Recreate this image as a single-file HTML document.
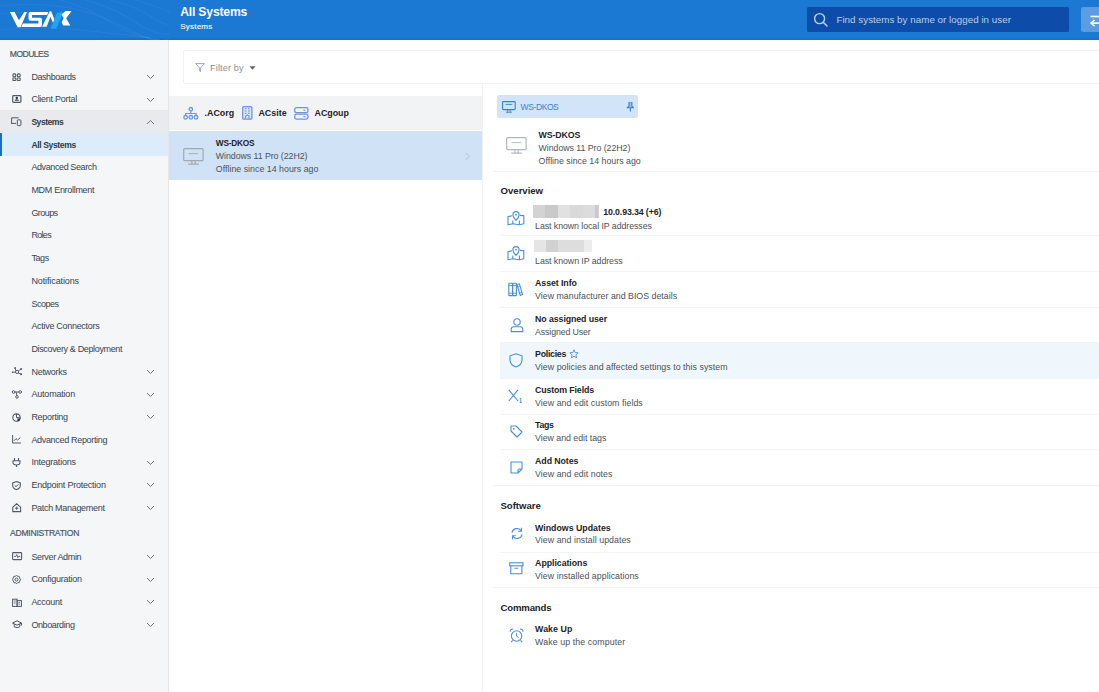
<!DOCTYPE html>
<html><head><meta charset="utf-8"><title>All Systems</title>
<style>
html,body{margin:0;padding:0;width:1099px;height:692px;overflow:hidden;background:#fff;}
body{position:relative;font-family:"Liberation Sans", sans-serif;}
.t{position:absolute;white-space:nowrap;}
.r{position:absolute;display:block;overflow:visible;}
</style></head><body>
<div class="r" style="left:0.00px;top:0.00px;width:1099.00px;height:692.00px;background:#ffffff;"></div>
<div class="r" style="left:0.00px;top:40.00px;width:168.00px;height:652.00px;background:#f4f6f8;"></div>
<div class="r" style="left:168.00px;top:40.00px;width:1.00px;height:652.00px;background:#e4e6e9;"></div>
<div class="r" style="left:0.00px;top:0.00px;width:1099.00px;height:40.00px;background:#1b78d3;"></div>
<div class="r" style="left:0.00px;top:37.50px;width:1099.00px;height:2.00px;background:#1b70c8;"></div>
<svg class="r" style="left:0.00px;top:0.00px;" width="170" height="40" viewBox="0 0 170 40"><g fill="none" stroke="#ffffff" stroke-opacity="0.07" stroke-width="0.8"><path d="M0,6 Q40,2 70,8 T130,30 T170,38"/><path d="M0,14 Q30,10 60,16"/><path d="M0,30 Q40,26 80,30 T150,38"/><path d="M60,0 Q90,8 110,22 T160,40"/><path d="M85,0 Q115,8 135,22 T170,34"/><path d="M110,0 Q135,6 150,16 T170,24"/><path d="M135,0 Q150,4 170,12"/></g></svg>
<svg class="r" style="left:0.00px;top:0.00px;" width="80" height="40" viewBox="0 0 80 40">
<polygon points="9.9,12.1 14.6,12.1 18.9,20.2 24.3,12.1 27.0,12.1 20.5,27.2 17.6,27.2" fill="#fff"/>
<path d="M30.4,12.1 H48.3 L47.2,15.1 H32 V17.8 H40.2 Q42,17.8 42,19.6 V25.3 Q42,27.1 40.2,27.1 H21.4 L22.8,23.6 H38.4 V20.7 H30.4 Q28.5,20.7 28.5,18.8 V14 Q28.5,12.1 30.4,12.1 Z" fill="#fff"/>
<polygon points="42.1,26.8 49.8,11.3 51.2,11.3 55.6,22.4 52.8,22.4 50.4,16.8 46.7,26.8" fill="#fff"/>
<polygon points="57.2,12.4 63.2,12.4 56.4,28.6 50.6,28.6" fill="#21a5f3"/>
<polygon points="65.5,10.9 71.6,10.9 66.2,18.3 70.3,25.6 63.2,25.6 61.6,22.2 63.6,18.3 61.6,14.6" fill="#fff"/>
</svg>
<div class="t" style="left:180.20px;top:6px;font-size:12.2px;line-height:12.2px;font-weight:bold;color:#ffffff;letter-spacing:-0.196px;">All Systems</div>
<div class="t" style="left:180.20px;top:23px;font-size:8.0px;line-height:8.0px;font-weight:normal;color:#f4f8fd;letter-spacing:0.221px;-webkit-text-stroke:0.15px #f4f8fd;">Systems</div>
<div class="r" style="left:806.80px;top:7.10px;width:261.90px;height:24.70px;background:#0e4ca9;border-radius:1.5px"></div>
<svg class="r" style="left:813.00px;top:12.00px;" width="16" height="16" viewBox="0 0 16 16"><circle cx="6.6" cy="6.6" r="5" fill="none" stroke="#b6d2f2" stroke-width="1.4"/><line x1="10.2" y1="10.2" x2="14" y2="14" stroke="#b6d2f2" stroke-width="1.5" stroke-linecap="round"/></svg>
<div class="t" style="left:836.40px;top:15px;font-size:9.8px;line-height:9.8px;font-weight:normal;color:#b4cfee;letter-spacing:0.023px;">Find systems by name or logged in user</div>
<div class="r" style="left:1080.50px;top:7.40px;width:30.00px;height:24.70px;background:#5c9de1;border-radius:2.5px"></div>
<svg class="r" style="left:1088.00px;top:12.00px;" width="14" height="16" viewBox="0 0 14 16"><line x1="2.6" y1="4.5" x2="14" y2="4.5" stroke="#fff" stroke-width="1.6"/><line x1="3.5" y1="11.1" x2="14" y2="11.1" stroke="#fff" stroke-width="1.6"/><polyline points="6.5,8 3,11.1 6.5,14.2" fill="none" stroke="#fff" stroke-width="1.6"/></svg>
<div class="t" style="left:9.80px;top:50px;font-size:8.6px;line-height:8.6px;font-weight:normal;color:#4d5965;letter-spacing:-0.571px;-webkit-text-stroke:0.2px #4d5965;">MODULES</div>
<div class="r" style="left:0.00px;top:110.40px;width:168.00px;height:22.70px;background:#e9eaed;"></div>
<div class="r" style="left:0.00px;top:133.10px;width:168.00px;height:22.90px;background:#dcecfb;"></div>
<div class="r" style="left:0.00px;top:133.10px;width:2.00px;height:22.90px;background:#1c6cca;"></div>
<div class="t" style="left:31.40px;top:73px;font-size:9.0px;line-height:9.0px;font-weight:normal;color:#394451;letter-spacing:-0.425px;">Dashboards</div>
<svg class="r" style="left:11.60px;top:72.50px;" width="11" height="10" viewBox="0 0 11 10"><rect x="0.9" y="0.9" width="2.9" height="2.9" rx="1" fill="none" stroke="#4f5a66" stroke-width="1.1"/><rect x="5.3" y="0.9" width="2.9" height="2.9" rx="1" fill="none" stroke="#4f5a66" stroke-width="1.1"/><rect x="0.9" y="5" width="2.9" height="2.5" rx="0.6" fill="none" stroke="#4f5a66" stroke-width="1.1"/><rect x="5.3" y="5" width="2.9" height="2.5" rx="0.6" fill="none" stroke="#4f5a66" stroke-width="1.1"/></svg>
<svg class="r" style="left:146.00px;top:74.30px;" width="9" height="6" viewBox="0 0 9 6"><polyline points="1,1 4.5,4.5 8,1" fill="none" stroke="#6a7580" stroke-width="1"/></svg>
<div class="t" style="left:31.40px;top:95px;font-size:9.0px;line-height:9.0px;font-weight:normal;color:#394451;letter-spacing:-0.260px;">Client Portal</div>
<svg class="r" style="left:11.60px;top:95.17px;" width="11" height="10" viewBox="0 0 11 10"><rect x="0.7" y="0.6" width="8.2" height="6.8" rx="0.8" fill="none" stroke="#4f5a66" stroke-width="1.2"/><circle cx="4.8" cy="2.9" r="1.2" fill="#2e3842"/><path d="M2.6,5.8 Q2.6,4.3 4.8,4.3 Q7,4.3 7,5.8 Z" fill="#2e3842"/></svg>
<svg class="r" style="left:146.00px;top:96.97px;" width="9" height="6" viewBox="0 0 9 6"><polyline points="1,1 4.5,4.5 8,1" fill="none" stroke="#6a7580" stroke-width="1"/></svg>
<div class="t" style="left:31.40px;top:118px;font-size:8.6px;line-height:8.6px;font-weight:bold;color:#2e3a47;letter-spacing:-0.513px;">Systems</div>
<svg class="r" style="left:10.80px;top:117.04px;" width="11" height="10" viewBox="0 0 11 10"><path d="M0.6,6 V0.8 H7.5 M0,6.4 H5" fill="none" stroke="#4f5a66" stroke-width="1"/><rect x="6.3" y="2.8" width="3.6" height="5.8" rx="0.8" fill="none" stroke="#4f5a66" stroke-width="1"/></svg>
<svg class="r" style="left:146.00px;top:118.84px;" width="9" height="6" viewBox="0 0 9 6"><polyline points="1,5 4.5,1.5 8,5" fill="none" stroke="#6a7580" stroke-width="1"/></svg>
<div class="t" style="left:31.40px;top:141px;font-size:8.6px;line-height:8.6px;font-weight:bold;color:#2e3a47;letter-spacing:-0.385px;">All Systems</div>
<div class="t" style="left:31.40px;top:163px;font-size:9.0px;line-height:9.0px;font-weight:normal;color:#394451;letter-spacing:-0.396px;">Advanced Search</div>
<div class="t" style="left:31.40px;top:186px;font-size:9.0px;line-height:9.0px;font-weight:normal;color:#394451;letter-spacing:-0.301px;">MDM Enrollment</div>
<div class="t" style="left:31.40px;top:209px;font-size:9.0px;line-height:9.0px;font-weight:normal;color:#394451;letter-spacing:-0.562px;">Groups</div>
<div class="t" style="left:31.40px;top:231px;font-size:9.0px;line-height:9.0px;font-weight:normal;color:#394451;letter-spacing:-0.678px;">Roles</div>
<div class="t" style="left:31.40px;top:254px;font-size:9.0px;line-height:9.0px;font-weight:normal;color:#394451;letter-spacing:-0.403px;">Tags</div>
<div class="t" style="left:31.40px;top:277px;font-size:9.0px;line-height:9.0px;font-weight:normal;color:#394451;letter-spacing:-0.110px;">Notifications</div>
<div class="t" style="left:31.40px;top:300px;font-size:9.0px;line-height:9.0px;font-weight:normal;color:#394451;letter-spacing:-0.503px;">Scopes</div>
<div class="t" style="left:31.40px;top:322px;font-size:9.0px;line-height:9.0px;font-weight:normal;color:#394451;letter-spacing:-0.296px;">Active Connectors</div>
<div class="t" style="left:31.40px;top:345px;font-size:9.0px;line-height:9.0px;font-weight:normal;color:#394451;letter-spacing:-0.354px;">Discovery &amp; Deployment</div>
<div class="t" style="left:31.40px;top:368px;font-size:9.0px;line-height:9.0px;font-weight:normal;color:#394451;letter-spacing:-0.259px;">Networks</div>
<svg class="r" style="left:11.60px;top:367.21px;" width="11" height="10" viewBox="0 0 11 10"><circle cx="5.1" cy="4.9" r="1.6" fill="none" stroke="#4f5a66" stroke-width="1"/><path d="M0.4,5.2 H3.5 M3.9,3.8 L3.1,1 M6.3,3.9 L9.1,2 M6.3,6 L9.1,7.2" stroke="#4f5a66" stroke-width="0.9"/><circle cx="3.1" cy="0.9" r="0.9" fill="#4f5a66"/><circle cx="9.1" cy="2" r="1" fill="#4f5a66"/><circle cx="9.1" cy="7.2" r="1" fill="#4f5a66"/><circle cx="0.6" cy="5.2" r="0.8" fill="#4f5a66"/></svg>
<svg class="r" style="left:146.00px;top:369.01px;" width="9" height="6" viewBox="0 0 9 6"><polyline points="1,1 4.5,4.5 8,1" fill="none" stroke="#6a7580" stroke-width="1"/></svg>
<div class="t" style="left:31.40px;top:390px;font-size:9.0px;line-height:9.0px;font-weight:normal;color:#394451;letter-spacing:-0.192px;">Automation</div>
<svg class="r" style="left:11.60px;top:389.88px;" width="11" height="10" viewBox="0 0 11 10"><circle cx="1.6" cy="2" r="1.3" fill="none" stroke="#4f5a66" stroke-width="1"/><circle cx="8.2" cy="2" r="1.3" fill="none" stroke="#4f5a66" stroke-width="1"/><circle cx="5" cy="6.9" r="1.3" fill="none" stroke="#4f5a66" stroke-width="1"/><path d="M2.9,2 H6.9 M4.2,2.2 L4.8,5.6" stroke="#4f5a66" stroke-width="1"/></svg>
<svg class="r" style="left:146.00px;top:391.68px;" width="9" height="6" viewBox="0 0 9 6"><polyline points="1,1 4.5,4.5 8,1" fill="none" stroke="#6a7580" stroke-width="1"/></svg>
<div class="t" style="left:31.40px;top:413px;font-size:9.0px;line-height:9.0px;font-weight:normal;color:#394451;letter-spacing:-0.290px;">Reporting</div>
<svg class="r" style="left:11.60px;top:412.55px;" width="11" height="10" viewBox="0 0 11 10"><circle cx="4.5" cy="4.6" r="3.7" fill="none" stroke="#4f5a66" stroke-width="1.1"/><path d="M4.5,0.9 V4.6 H8.2" fill="none" stroke="#4f5a66" stroke-width="1"/><path d="M5.4,5.5 H8.6 A4,4 0 0 1 5.4,8.6 Z" fill="#2f3a45"/></svg>
<svg class="r" style="left:146.00px;top:414.35px;" width="9" height="6" viewBox="0 0 9 6"><polyline points="1,1 4.5,4.5 8,1" fill="none" stroke="#6a7580" stroke-width="1"/></svg>
<div class="t" style="left:31.40px;top:436px;font-size:9.0px;line-height:9.0px;font-weight:normal;color:#394451;letter-spacing:-0.321px;">Advanced Reporting</div>
<svg class="r" style="left:11.60px;top:435.22px;" width="11" height="10" viewBox="0 0 11 10"><path d="M0.6,0 V8 H9" fill="none" stroke="#4f5a66" stroke-width="1"/><path d="M2,5.8 L4,3.6 L5.6,5 L8.4,2.4" fill="none" stroke="#4f5a66" stroke-width="1"/></svg>
<div class="t" style="left:31.40px;top:458px;font-size:9.0px;line-height:9.0px;font-weight:normal;color:#394451;letter-spacing:-0.221px;">Integrations</div>
<svg class="r" style="left:11.60px;top:457.89px;" width="11" height="10" viewBox="0 0 11 10"><path d="M2.5,0 V2.5 M6.5,0 V2.5 M1,2.7 H8 V4.5 Q8,7 4.5,7 Q1,7 1,4.5 Z M4.5,7 V9" fill="none" stroke="#4f5a66" stroke-width="1.1"/></svg>
<svg class="r" style="left:146.00px;top:459.69px;" width="9" height="6" viewBox="0 0 9 6"><polyline points="1,1 4.5,4.5 8,1" fill="none" stroke="#6a7580" stroke-width="1"/></svg>
<div class="t" style="left:31.40px;top:481px;font-size:9.0px;line-height:9.0px;font-weight:normal;color:#394451;letter-spacing:-0.225px;">Endpoint Protection</div>
<svg class="r" style="left:11.60px;top:480.56px;" width="11" height="10" viewBox="0 0 11 10"><path d="M4.5,0.6 L8.3,1.9 V4.4 Q8.3,7.3 4.5,8.6 Q0.7,7.3 0.7,4.4 V1.9 Z" fill="none" stroke="#4f5a66" stroke-width="1.1"/><path d="M2.8,4.5 L4.1,5.7 L6.3,3.3" fill="none" stroke="#4f5a66" stroke-width="1"/></svg>
<svg class="r" style="left:146.00px;top:482.36px;" width="9" height="6" viewBox="0 0 9 6"><polyline points="1,1 4.5,4.5 8,1" fill="none" stroke="#6a7580" stroke-width="1"/></svg>
<div class="t" style="left:31.40px;top:504px;font-size:9.0px;line-height:9.0px;font-weight:normal;color:#394451;letter-spacing:-0.303px;">Patch Management</div>
<svg class="r" style="left:11.60px;top:503.23px;" width="11" height="10" viewBox="0 0 11 10"><path d="M0.8,4.2 L4.7,0.8 L8.6,4.2 V8.6 H0.8 Z" fill="none" stroke="#4f5a66" stroke-width="1.1"/><path d="M4.7,3.6 V6.8 M3.1,5.2 H6.3" stroke="#4f5a66" stroke-width="1"/></svg>
<svg class="r" style="left:146.00px;top:505.03px;" width="9" height="6" viewBox="0 0 9 6"><polyline points="1,1 4.5,4.5 8,1" fill="none" stroke="#6a7580" stroke-width="1"/></svg>
<div class="t" style="left:10.10px;top:529px;font-size:8.6px;line-height:8.6px;font-weight:normal;color:#4d5965;letter-spacing:-0.280px;-webkit-text-stroke:0.2px #4d5965;">ADMINISTRATION</div>
<div class="t" style="left:31.40px;top:553px;font-size:9.0px;line-height:9.0px;font-weight:normal;color:#394451;letter-spacing:-0.348px;">Server Admin</div>
<svg class="r" style="left:11.60px;top:552.20px;" width="11" height="10" viewBox="0 0 11 10"><rect x="0.6" y="0.6" width="9" height="7" rx="0.8" fill="none" stroke="#4f5a66" stroke-width="1.1"/><path d="M2,4.4 H3.8 L4.8,2.6 L5.8,5.6 L6.6,4.4 H8.2" fill="none" stroke="#4f5a66" stroke-width="0.9"/></svg>
<svg class="r" style="left:146.00px;top:554.00px;" width="9" height="6" viewBox="0 0 9 6"><polyline points="1,1 4.5,4.5 8,1" fill="none" stroke="#6a7580" stroke-width="1"/></svg>
<div class="t" style="left:31.40px;top:575px;font-size:9.0px;line-height:9.0px;font-weight:normal;color:#394451;letter-spacing:-0.244px;">Configuration</div>
<svg class="r" style="left:11.60px;top:574.87px;" width="11" height="10" viewBox="0 0 11 10"><circle cx="4.5" cy="4.5" r="1.5" fill="none" stroke="#4f5a66" stroke-width="1"/><path d="M4.5,0.5 L5.6,1.2 L7.2,1.4 L7.6,2.8 L8.5,4.5 L7.6,6.2 L7.2,7.6 L5.6,7.8 L4.5,8.5 L3.4,7.8 L1.8,7.6 L1.4,6.2 L0.5,4.5 L1.4,2.8 L1.8,1.4 L3.4,1.2 Z" fill="none" stroke="#4f5a66" stroke-width="1"/></svg>
<svg class="r" style="left:146.00px;top:576.67px;" width="9" height="6" viewBox="0 0 9 6"><polyline points="1,1 4.5,4.5 8,1" fill="none" stroke="#6a7580" stroke-width="1"/></svg>
<div class="t" style="left:31.40px;top:598px;font-size:9.0px;line-height:9.0px;font-weight:normal;color:#394451;letter-spacing:-0.270px;">Account</div>
<svg class="r" style="left:11.60px;top:597.54px;" width="11" height="10" viewBox="0 0 11 10"><rect x="0.6" y="1.2" width="4.5" height="7.2" fill="none" stroke="#4f5a66" stroke-width="1"/><rect x="5.1" y="2.6" width="4.3" height="5.8" fill="none" stroke="#4f5a66" stroke-width="1"/><path d="M1.8,3 H3.8 M1.8,5 H3.8 M6.4,4.4 H8 M6.4,6.2 H8" stroke="#4f5a66" stroke-width="0.8"/></svg>
<svg class="r" style="left:146.00px;top:599.34px;" width="9" height="6" viewBox="0 0 9 6"><polyline points="1,1 4.5,4.5 8,1" fill="none" stroke="#6a7580" stroke-width="1"/></svg>
<div class="t" style="left:31.40px;top:621px;font-size:9.0px;line-height:9.0px;font-weight:normal;color:#394451;letter-spacing:-0.393px;">Onboarding</div>
<svg class="r" style="left:11.60px;top:620.21px;" width="11" height="10" viewBox="0 0 11 10"><path d="M0.5,3 L5,0.8 L9.5,3 L5,5.2 Z" fill="none" stroke="#4f5a66" stroke-width="1"/><path d="M2.2,4 V6.8 Q5,8.6 7.8,6.8 V4 M9.5,3 V5.5" fill="none" stroke="#4f5a66" stroke-width="1"/></svg>
<svg class="r" style="left:146.00px;top:622.01px;" width="9" height="6" viewBox="0 0 9 6"><polyline points="1,1 4.5,4.5 8,1" fill="none" stroke="#6a7580" stroke-width="1"/></svg>
<div class="r" style="left:183.30px;top:50.30px;width:930.00px;height:33.70px;background:#ffffff;box-sizing:border-box;border:1px solid #eff1f3;border-radius:2px"></div>
<svg class="r" style="left:194.50px;top:63.00px;" width="10" height="9" viewBox="0 0 10 9"><path d="M0.6,0.6 H9.4 L5.6,4.8 V8.6 L4.4,7.8 V4.8 Z" fill="none" stroke="#8d9ad0" stroke-width="0.9" stroke-linejoin="round"/></svg>
<div class="t" style="left:210.10px;top:64px;font-size:9.2px;line-height:9.2px;font-weight:normal;color:#8b9097;letter-spacing:0.111px;">Filter by</div>
<svg class="r" style="left:249.00px;top:66.00px;" width="7" height="4" viewBox="0 0 7 4"><polygon points="0.5,0.3 6.5,0.3 3.5,3.7" fill="#5f6368"/></svg>
<div class="r" style="left:168.50px;top:96.00px;width:313.20px;height:34.30px;background:#f1f3f5;"></div>
<div class="r" style="left:168.50px;top:130.30px;width:313.20px;height:0.80px;background:#ffffff;"></div>
<div class="r" style="left:168.50px;top:131.10px;width:313.20px;height:48.50px;background:#cfe2f6;"></div>
<div class="r" style="left:481.50px;top:84.00px;width:1.00px;height:608.00px;background:#eff0f2;"></div>
<svg class="r" style="left:182.50px;top:106.80px;" width="16" height="13" viewBox="0 0 16 13"><circle cx="7.8" cy="2.2" r="1.7" fill="none" stroke="#6c96dc" stroke-width="1.3"/><path d="M7.8,3.9 V6.5 M2.6,8.6 V6.5 H13 V8.6" fill="none" stroke="#6c96dc" stroke-width="1.2"/><circle cx="2.6" cy="10.3" r="1.8" fill="none" stroke="#6c96dc" stroke-width="1.3"/><circle cx="7.8" cy="10.3" r="1.8" fill="none" stroke="#6c96dc" stroke-width="1.3"/><circle cx="13" cy="10.3" r="1.8" fill="none" stroke="#6c96dc" stroke-width="1.3"/></svg>
<div class="t" style="left:204.60px;top:109px;font-size:8.9px;line-height:8.9px;font-weight:bold;color:#1f2327;letter-spacing:-0.013px;">.ACorg</div>
<svg class="r" style="left:241.50px;top:106.20px;" width="11" height="14" viewBox="0 0 11 14"><rect x="0.7" y="0.7" width="9.2" height="12.4" rx="1.2" fill="#dfe7f5" stroke="#6c96dc" stroke-width="1.3"/><path d="M2.8,2.8 H4.6 M6,2.8 H7.8 M2.8,5 H4.6 M6,5 H7.8 M2.8,7.2 H4.6 M6,7.2 H7.8 M3.6,12.8 V10 L5.3,8.8 L7,10 V12.8" fill="none" stroke="#6c96dc" stroke-width="1.1"/></svg>
<div class="t" style="left:258.40px;top:109px;font-size:8.9px;line-height:8.9px;font-weight:bold;color:#1f2327;letter-spacing:0.041px;">ACsite</div>
<svg class="r" style="left:293.50px;top:106.60px;" width="15" height="13" viewBox="0 0 15 13"><rect x="0.7" y="0.7" width="13.3" height="5" rx="1.8" fill="none" stroke="#6c96dc" stroke-width="1.3"/><rect x="0.7" y="7.1" width="13.3" height="5" rx="1.8" fill="none" stroke="#6c96dc" stroke-width="1.3"/><path d="M9.3,3.2 H11.6 M9.3,9.6 H11.6" stroke="#6c96dc" stroke-width="1"/></svg>
<div class="t" style="left:314.60px;top:109px;font-size:8.9px;line-height:8.9px;font-weight:bold;color:#1f2327;letter-spacing:-0.041px;">ACgoup</div>
<svg class="r" style="left:182.80px;top:147.80px;" width="21" height="17" viewBox="0 0 21 17"><rect x="0.7" y="0.7" width="19.4" height="12" rx="1" fill="none" stroke="#a3a9b0" stroke-width="1.2"/><path d="M5.6,5.6 H15" stroke="#a3a9b0" stroke-width="0.9"/><path d="M8.9,12.7 V15.4 M12.1,12.7 V15.4 M5.2,16.1 H15.8" stroke="#a3a9b0" stroke-width="1.1"/></svg>
<div class="t" style="left:215.80px;top:139px;font-size:8.3px;line-height:8.3px;font-weight:bold;color:#1f2327;letter-spacing:-0.236px;">WS-DKOS</div>
<div class="t" style="left:215.80px;top:152px;font-size:8.8px;line-height:8.8px;font-weight:normal;color:#4d5258;letter-spacing:-0.053px;">Windows 11 Pro (22H2)</div>
<div class="t" style="left:215.80px;top:165px;font-size:8.8px;line-height:8.8px;font-weight:normal;color:#4d5258;letter-spacing:0.021px;">Offline since 14 hours ago</div>
<svg class="r" style="left:463.50px;top:151.50px;" width="8" height="9" viewBox="0 0 8 9"><polyline points="1.5,0.8 5.5,4.5 1.5,8.2" fill="none" stroke="#c0cfdf" stroke-width="1.2"/></svg>
<div class="r" style="left:497.00px;top:95.40px;width:141.10px;height:22.90px;background:#d2e4f8;border-radius:2.5px"></div>
<svg class="r" style="left:501.50px;top:100.80px;" width="14" height="12" viewBox="0 0 14 12"><rect x="0.6" y="0.6" width="12.6" height="8" rx="0.8" fill="none" stroke="#3c80d0" stroke-width="1.1"/><path d="M3.5,3.4 H10.3" stroke="#3c80d0" stroke-width="0.9"/><path d="M5.6,8.6 V10.6 M8.2,8.6 V10.6 M4,11.2 H9.8" stroke="#3c80d0" stroke-width="1"/></svg>
<div class="t" style="left:520.60px;top:103px;font-size:8.5px;line-height:8.5px;font-weight:normal;color:#3c80d0;letter-spacing:-0.402px;">WS-DKOS</div>
<svg class="r" style="left:625.60px;top:101.80px;" width="9" height="10" viewBox="0 0 9 10"><path d="M2.2,0.8 H6.6 M3,0.8 V4 L1.2,5.8 H7.6 L5.8,4 V0.8 M4.4,5.8 V9.6" fill="none" stroke="#3c80d0" stroke-width="1.1" stroke-linejoin="round"/><path d="M3,1.5 H5.8 V4.2 L7,5.4 H1.8 L3,4.2 Z" fill="#3c80d0" opacity="0.35"/></svg>
<svg class="r" style="left:505.50px;top:136.80px;" width="21" height="17" viewBox="0 0 21 17"><rect x="0.7" y="0.7" width="19.4" height="12" rx="1" fill="none" stroke="#b2b6ba" stroke-width="1.2"/><path d="M5.6,5.6 H15" stroke="#b2b6ba" stroke-width="0.9"/><path d="M8.9,12.7 V15.4 M12.1,12.7 V15.4 M5.2,16.1 H15.8" stroke="#b2b6ba" stroke-width="1.1"/></svg>
<div class="t" style="left:538.60px;top:131px;font-size:8.8px;line-height:8.8px;font-weight:bold;color:#1f2327;letter-spacing:-0.122px;">WS-DKOS</div>
<div class="t" style="left:538.60px;top:144px;font-size:8.8px;line-height:8.8px;font-weight:normal;color:#4d5258;letter-spacing:-0.048px;">Windows 11 Pro (22H2)</div>
<div class="t" style="left:538.60px;top:157px;font-size:8.8px;line-height:8.8px;font-weight:normal;color:#4d5258;letter-spacing:0.001px;">Offline since 14 hours ago</div>
<div class="r" style="left:492.50px;top:171.20px;width:607.00px;height:1.00px;background:#f2f3f5;"></div>
<div class="t" style="left:500.60px;top:186px;font-size:9.6px;line-height:9.6px;font-weight:bold;color:#1f2327;letter-spacing:-0.030px;">Overview</div>
<div class="r" style="left:533.10px;top:205.10px;width:66.20px;height:12.70px;background:linear-gradient(90deg,#d3d3d3 0,#d3d3d3 12.1px,#c9c9c9 12.1px,#c9c9c9 24.8px,#e1e1e1 24.8px,#e1e1e1 36.9px,#d9d9d9 36.9px,#d9d9d9 49.6px,#dcdcdc 49.6px,#dcdcdc 61.7px,#c4c4c4 61.7px,#d0d0d0 66.2px);filter:blur(0.4px)"></div>
<div class="t" style="left:603.20px;top:208px;font-size:8.8px;line-height:8.8px;font-weight:bold;color:#1f2327;letter-spacing:-0.124px;">10.0.93.34 (+6)</div>
<div class="t" style="left:535.10px;top:222px;font-size:8.8px;line-height:8.8px;font-weight:normal;color:#4d5258;letter-spacing:-0.068px;">Last known local IP addresses</div>
<svg class="r" style="left:507.20px;top:209.50px;" width="17" height="16" viewBox="0 0 17 16"><path d="M5.2,5.8 L1,6.6 V14.8 L5.8,13.8 L12.4,14.8 L16.8,13.8 V5.6 L12.8,5.4" fill="none" stroke="#4a8fd9" stroke-width="1.1" stroke-linejoin="round"/><path d="M5.8,10.4 V13.8 M12.4,10.4 V14.8" stroke="#4a8fd9" stroke-width="1.1"/><path d="M9,10.3 Q5.9,7.3 5.9,4.7 A3.1,3.1 0 0 1 12.1,4.7 Q12.1,7.3 9,10.3 Z" fill="none" stroke="#4a8fd9" stroke-width="1.1"/><circle cx="9" cy="4.7" r="0.9" fill="#4a8fd9"/></svg>
<div class="r" style="left:500.00px;top:234.60px;width:599.00px;height:1.00px;background:#f3f4f6;"></div>
<div class="r" style="left:533.70px;top:240.10px;width:58.00px;height:12.10px;background:linear-gradient(90deg,#e5e5e5 0,#e5e5e5 12.1px,#d1d1d1 12.1px,#d1d1d1 23.6px,#dddddd 23.6px,#dddddd 50.3px,#ececec 50.3px,#ececec 58px);filter:blur(0.4px)"></div>
<div class="t" style="left:535.10px;top:257px;font-size:8.8px;line-height:8.8px;font-weight:normal;color:#4d5258;letter-spacing:-0.064px;">Last known IP address</div>
<svg class="r" style="left:507.20px;top:245.00px;" width="17" height="16" viewBox="0 0 17 16"><path d="M5.2,5.8 L1,6.6 V14.8 L5.8,13.8 L12.4,14.8 L16.8,13.8 V5.6 L12.8,5.4" fill="none" stroke="#4a8fd9" stroke-width="1.1" stroke-linejoin="round"/><path d="M5.8,10.4 V13.8 M12.4,10.4 V14.8" stroke="#4a8fd9" stroke-width="1.1"/><path d="M9,10.3 Q5.9,7.3 5.9,4.7 A3.1,3.1 0 0 1 12.1,4.7 Q12.1,7.3 9,10.3 Z" fill="none" stroke="#4a8fd9" stroke-width="1.1"/><circle cx="9" cy="4.7" r="0.9" fill="#4a8fd9"/></svg>
<div class="r" style="left:500.00px;top:270.70px;width:599.00px;height:1.00px;background:#f3f4f6;"></div>
<div class="t" style="left:535.10px;top:279px;font-size:8.8px;line-height:8.8px;font-weight:bold;color:#1f2327;letter-spacing:-0.082px;">Asset Info</div>
<div class="t" style="left:535.10px;top:292px;font-size:8.8px;line-height:8.8px;font-weight:normal;color:#4d5258;letter-spacing:0.009px;">View manufacturer and BIOS details</div>
<svg class="r" style="left:508.30px;top:281.70px;" width="17" height="16" viewBox="0 0 17 16"><rect x="0.8" y="1.2" width="3.8" height="12.4" rx="0.4" fill="none" stroke="#4a8fd9" stroke-width="1.1"/><rect x="4.6" y="1.2" width="3.8" height="12.4" rx="0.4" fill="none" stroke="#4a8fd9" stroke-width="1.1"/><path d="M9,2.6 L11.4,1.8 L14.6,12.6 L12.2,13.4 Z" fill="none" stroke="#4a8fd9" stroke-width="1.1" stroke-linejoin="round"/><path d="M0.8,3.6 H8.4 M0.8,11.2 H8.4 M9.7,5 L12,4.2 M11.6,11.2 L13.9,10.4" stroke="#4a8fd9" stroke-width="0.9"/></svg>
<div class="r" style="left:500.00px;top:306.70px;width:599.00px;height:1.00px;background:#f3f4f6;"></div>
<div class="t" style="left:535.10px;top:315px;font-size:8.8px;line-height:8.8px;font-weight:bold;color:#1f2327;letter-spacing:-0.090px;">No assigned user</div>
<div class="t" style="left:535.10px;top:328px;font-size:8.8px;line-height:8.8px;font-weight:normal;color:#4d5258;letter-spacing:-0.144px;">Assigned User</div>
<svg class="r" style="left:509.50px;top:318.20px;" width="17" height="16" viewBox="0 0 17 16"><circle cx="7" cy="4" r="3.2" fill="none" stroke="#4a8fd9" stroke-width="1.1"/><path d="M1.2,13.6 V11.6 Q1.2,8.8 4,8.8 H10 Q12.8,8.8 12.8,11.6 V13.6 Z" fill="none" stroke="#4a8fd9" stroke-width="1.1"/></svg>
<div class="r" style="left:500.00px;top:342.30px;width:599.00px;height:1.00px;background:#f3f4f6;"></div>
<div class="r" style="left:500.00px;top:343.30px;width:599.00px;height:34.60px;background:#eff7fd;"></div>
<div class="t" style="left:535.10px;top:350px;font-size:8.8px;line-height:8.8px;font-weight:bold;color:#1f2327;letter-spacing:-0.295px;">Policies</div>
<div class="t" style="left:535.10px;top:363px;font-size:8.8px;line-height:8.8px;font-weight:normal;color:#4d5258;letter-spacing:0.042px;">View policies and affected settings to this system</div>
<svg class="r" style="left:509.20px;top:353.10px;" width="17" height="16" viewBox="0 0 17 16"><path d="M7,0.8 L13,2.8 V7 Q13,12 7,14 Q1,12 1,7 V2.8 Z" fill="none" stroke="#4a8fd9" stroke-width="1.1"/></svg>
<div class="r" style="left:500.00px;top:377.90px;width:599.00px;height:1.00px;background:#f3f4f6;"></div>
<svg class="r" style="left:569.20px;top:348.80px;" width="10" height="10" viewBox="0 0 10 10"><polygon points="5,0.8 6.2,3.6 9.2,3.8 6.9,5.8 7.6,8.9 5,7.3 2.4,8.9 3.1,5.8 0.8,3.8 3.8,3.6" fill="none" stroke="#4a8fd9" stroke-width="0.9" stroke-linejoin="round"/></svg>
<div class="t" style="left:535.10px;top:386px;font-size:8.8px;line-height:8.8px;font-weight:bold;color:#1f2327;letter-spacing:-0.136px;">Custom Fields</div>
<div class="t" style="left:535.10px;top:399px;font-size:8.8px;line-height:8.8px;font-weight:normal;color:#4d5258;letter-spacing:0.047px;">View and edit custom fields</div>
<svg class="r" style="left:508.30px;top:389.10px;" width="17" height="16" viewBox="0 0 17 16"><path d="M0.8,0.8 L10,12 M10,0.8 L0.8,12" stroke="#4a8fd9" stroke-width="1.1" fill="none"/><path d="M11.6,10 L12.8,9.2 V13.4 M11.6,13.4 H14" stroke="#4a8fd9" stroke-width="0.9" fill="none"/></svg>
<div class="r" style="left:500.00px;top:413.50px;width:599.00px;height:1.00px;background:#f3f4f6;"></div>
<div class="t" style="left:535.10px;top:421px;font-size:8.8px;line-height:8.8px;font-weight:bold;color:#1f2327;letter-spacing:-0.363px;">Tags</div>
<div class="t" style="left:535.10px;top:434px;font-size:8.8px;line-height:8.8px;font-weight:normal;color:#4d5258;letter-spacing:-0.027px;">View and edit tags</div>
<svg class="r" style="left:509.60px;top:425.30px;" width="17" height="16" viewBox="0 0 17 16"><path d="M1,1.5 V6 L7,12 L12,7 L6,1 H1.5 Z" fill="none" stroke="#4a8fd9" stroke-width="1.1" stroke-linejoin="round" transform="rotate(0)"/><circle cx="3.8" cy="3.8" r="0.9" fill="#4a8fd9"/></svg>
<div class="r" style="left:500.00px;top:449.10px;width:599.00px;height:1.00px;background:#f3f4f6;"></div>
<div class="t" style="left:535.10px;top:457px;font-size:8.8px;line-height:8.8px;font-weight:bold;color:#1f2327;letter-spacing:-0.088px;">Add Notes</div>
<div class="t" style="left:535.10px;top:470px;font-size:8.8px;line-height:8.8px;font-weight:normal;color:#4d5258;letter-spacing:0.036px;">View and edit notes</div>
<svg class="r" style="left:509.60px;top:460.60px;" width="17" height="16" viewBox="0 0 17 16"><path d="M1,1 H12 V8 L8,12 H1 Z M12,8 H9.2 Q8,8 8,9.2 V12" fill="none" stroke="#4a8fd9" stroke-width="1.1" stroke-linejoin="round"/></svg>
<div class="r" style="left:493.00px;top:484.60px;width:606.00px;height:1.00px;background:#f3f4f6;"></div>
<div class="t" style="left:500.40px;top:501px;font-size:9.6px;line-height:9.6px;font-weight:bold;color:#1f2327;letter-spacing:-0.006px;">Software</div>
<div class="t" style="left:535.10px;top:524px;font-size:8.8px;line-height:8.8px;font-weight:bold;color:#1f2327;letter-spacing:-0.008px;">Windows Updates</div>
<div class="t" style="left:535.10px;top:536px;font-size:8.8px;line-height:8.8px;font-weight:normal;color:#4d5258;letter-spacing:0.041px;">View and install updates</div>
<svg class="r" style="left:509.60px;top:527.20px;" width="17" height="16" viewBox="0 0 17 16"><path d="M2,5.6 A5,5 0 0 1 11,3.6 M12,7.4 A5,5 0 0 1 3,9.4" fill="none" stroke="#4a8fd9" stroke-width="1.1"/><path d="M11.4,0.8 V4.2 H8.2 M2.6,12.2 V8.8 H5.8" fill="none" stroke="#4a8fd9" stroke-width="1.1"/></svg>
<div class="r" style="left:500.00px;top:551.60px;width:599.00px;height:1.00px;background:#f3f4f6;"></div>
<div class="t" style="left:535.10px;top:559px;font-size:8.8px;line-height:8.8px;font-weight:bold;color:#1f2327;letter-spacing:-0.055px;">Applications</div>
<div class="t" style="left:535.10px;top:572px;font-size:8.8px;line-height:8.8px;font-weight:normal;color:#4d5258;letter-spacing:0.044px;">View installed applications</div>
<svg class="r" style="left:508.80px;top:562.00px;" width="17" height="16" viewBox="0 0 17 16"><rect x="0.7" y="0.8" width="13.3" height="3" fill="none" stroke="#4a8fd9" stroke-width="1.1"/><path d="M1.8,3.8 V11.8 H12.9 V3.8 M5.5,6.2 H9.2" fill="none" stroke="#4a8fd9" stroke-width="1.1"/></svg>
<div class="r" style="left:493.00px;top:586.80px;width:606.00px;height:1.00px;background:#f3f4f6;"></div>
<div class="t" style="left:500.60px;top:603px;font-size:9.6px;line-height:9.6px;font-weight:bold;color:#1f2327;letter-spacing:-0.182px;">Commands</div>
<div class="t" style="left:535.10px;top:625px;font-size:8.8px;line-height:8.8px;font-weight:bold;color:#1f2327;letter-spacing:0.061px;">Wake Up</div>
<div class="t" style="left:535.10px;top:638px;font-size:8.8px;line-height:8.8px;font-weight:normal;color:#4d5258;letter-spacing:0.100px;">Wake up the computer</div>
<svg class="r" style="left:508.50px;top:627.80px;" width="17" height="16" viewBox="0 0 17 16"><circle cx="7.6" cy="8" r="5.2" fill="none" stroke="#4a8fd9" stroke-width="1.1"/><path d="M7.6,5.2 V8.2 L9.6,9.4" fill="none" stroke="#4a8fd9" stroke-width="1"/><path d="M1,3.6 Q1.5,0.8 4.2,1 M14.2,3.6 Q13.7,0.8 11,1 M3.6,12.2 L2.2,14.2 M11.6,12.2 L13,14.2" fill="none" stroke="#4a8fd9" stroke-width="1.1"/></svg>
</body></html>
